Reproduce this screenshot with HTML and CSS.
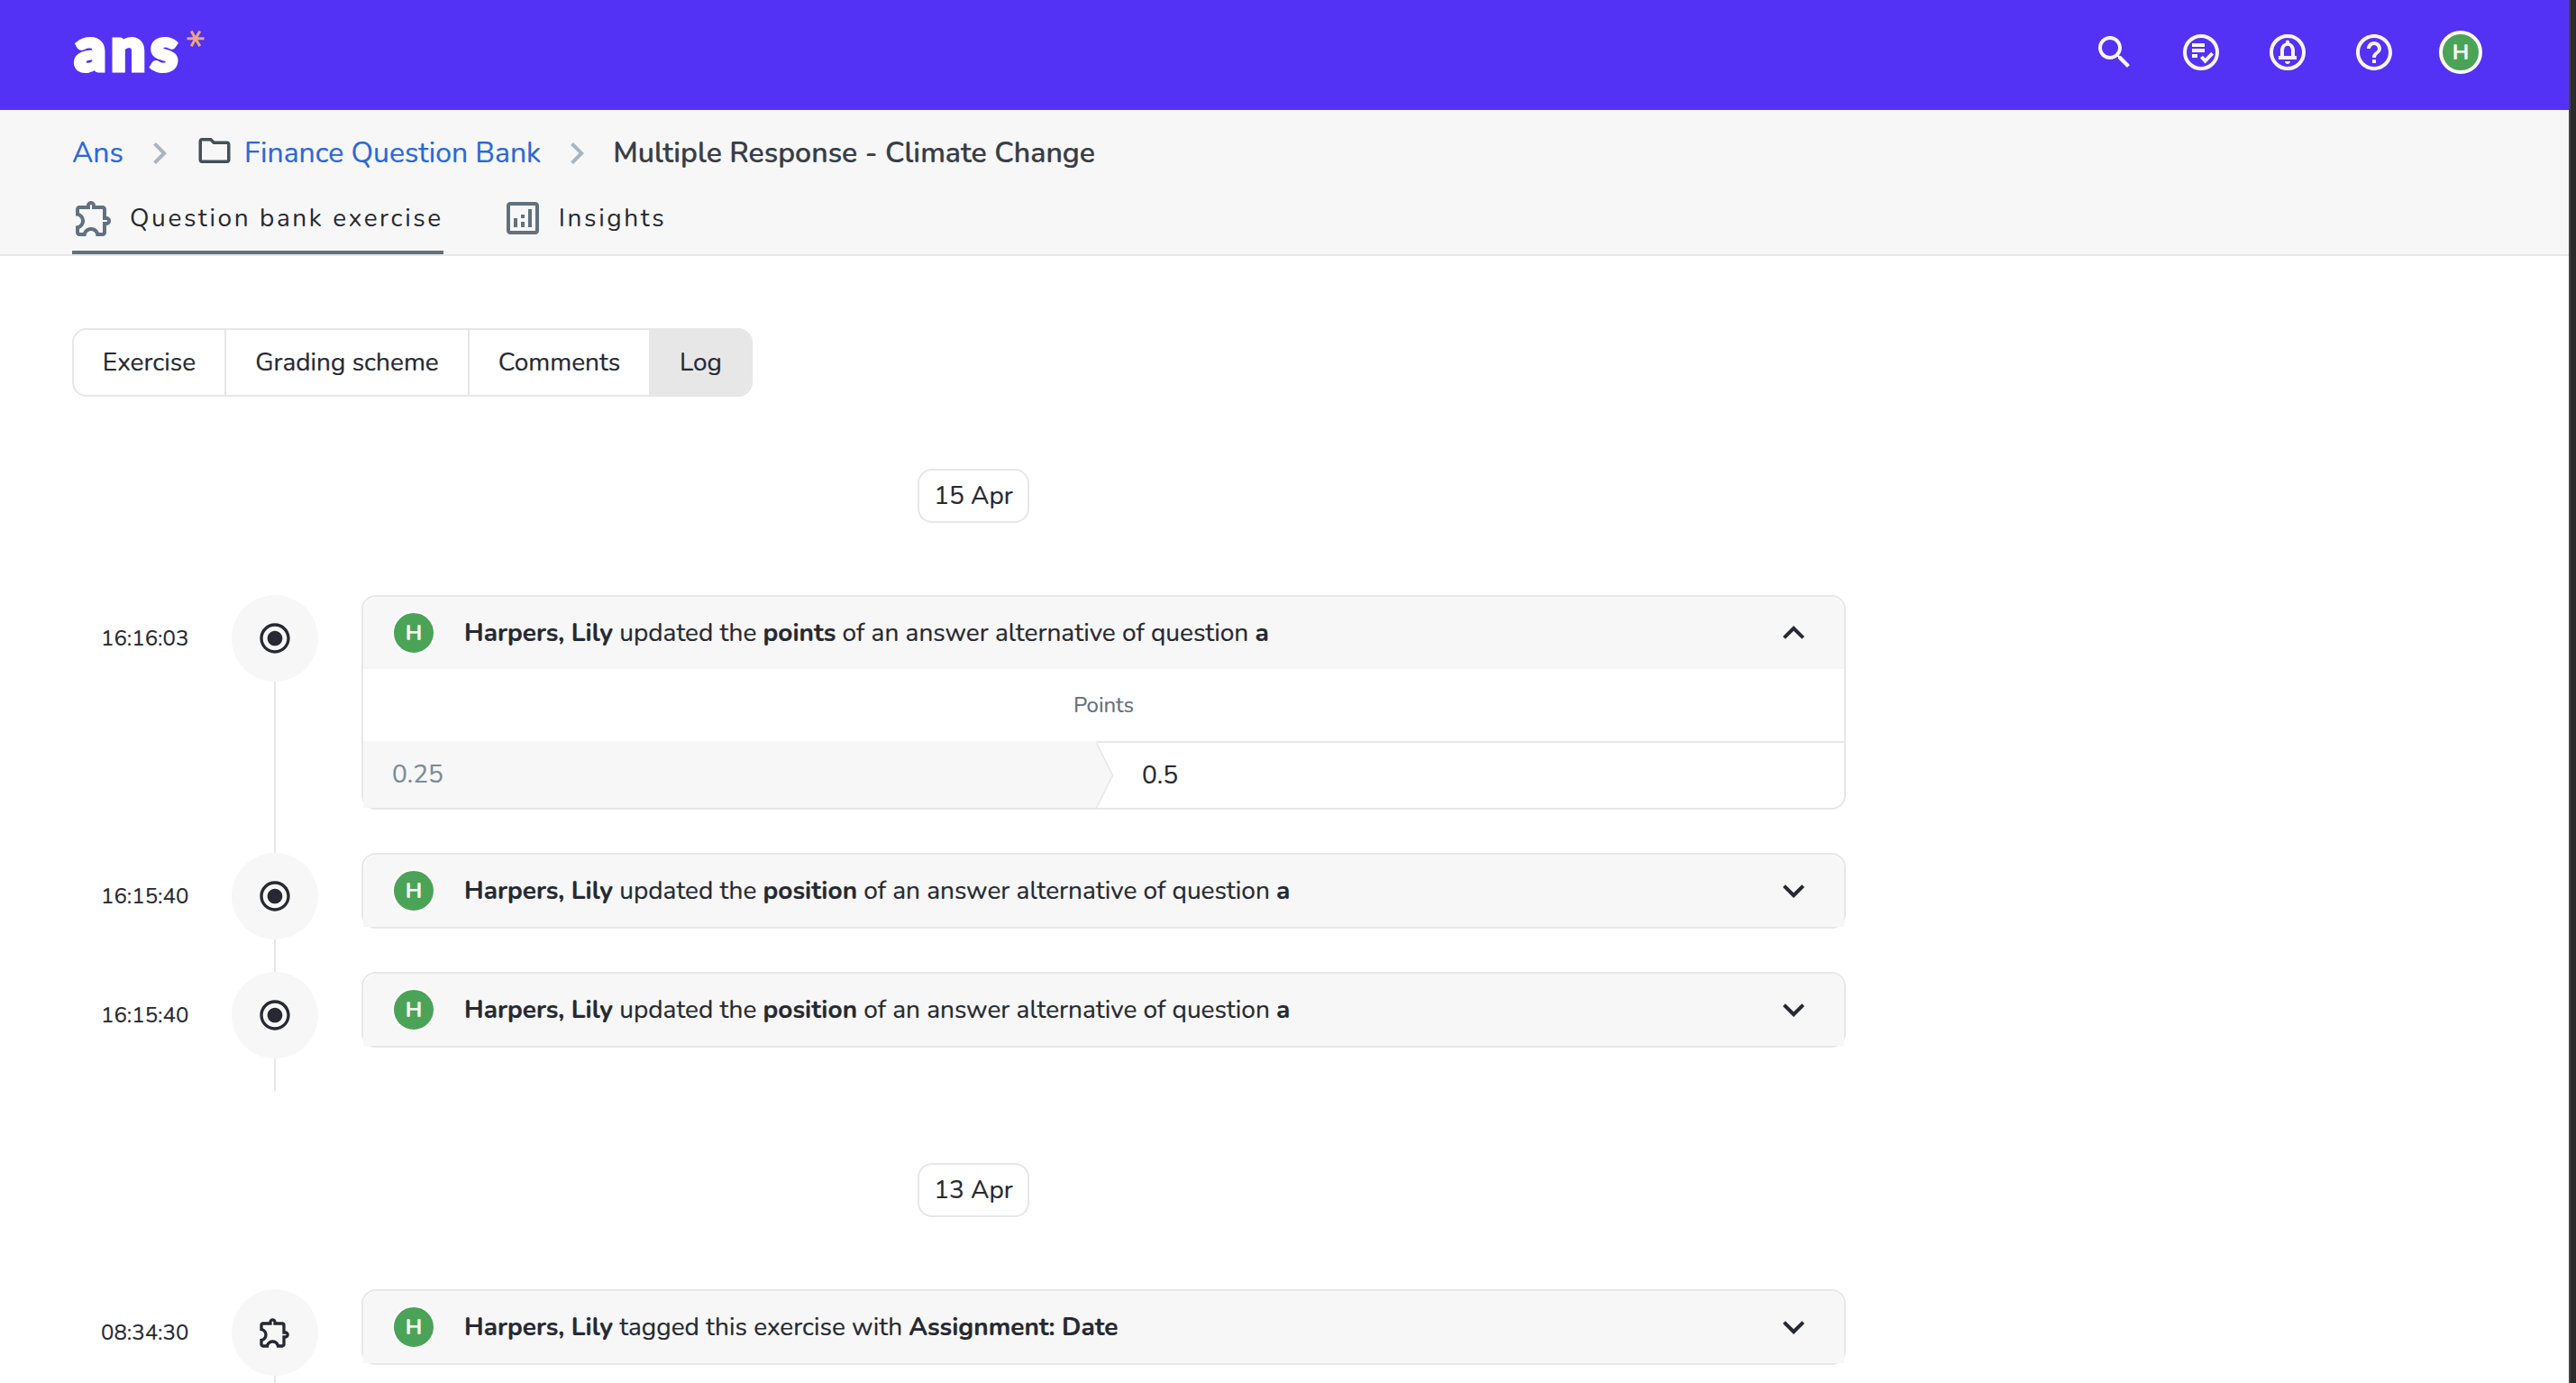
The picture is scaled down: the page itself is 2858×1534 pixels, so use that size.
FILE: index.html
```
<!DOCTYPE html>
<html lang="en">
<head>
    <meta charset="UTF-8">
    <meta name="viewport" content="width=device-width, initial-scale=1.0">
    <title>Multiple Response - Climate Change</title>
    <link rel="stylesheet" href="styles.css">
</head>
<body>
    <!-- Shared icons -->
    <svg class="icon-defs" width="0" height="0">
        <symbol id="chevron-right" viewBox="0 0 24 24"><path d="M10 6L8.59 7.41 13.17 12l-4.58 4.59L10 18l6-6z"/></symbol>
        <symbol id="expand-more" viewBox="0 0 24 24"><path d="M16.59 8.59L12 13.17 7.41 8.59 6 10l6 6 6-6z"/></symbol>
        <symbol id="expand-less" viewBox="0 0 24 24"><path d="M12 8l-6 6 1.41 1.41L12 10.83l4.59 4.58L18 14z"/></symbol>
        <symbol id="radio" viewBox="0 0 24 24"><path d="M12 7c-2.76 0-5 2.24-5 5s2.24 5 5 5 5-2.24 5-5-2.24-5-5-5zm0-5C6.48 2 2 6.48 2 12s4.48 10 10 10 10-4.48 10-10S17.52 2 12 2zm0 18c-4.42 0-8-3.58-8-8s3.58-8 8-8 8 3.58 8 8-3.58 8-8 8z"/></symbol>
        <symbol id="puzzle" viewBox="0 0 24 24"><path d="M10.5 4.5c.28 0 .5.22.5.5v2h6v6h2c.28 0 .5.22.5.5s-.22.5-.5.5h-2v6h-2.12c-.68-1.75-2.39-3-4.38-3s-3.7 1.25-4.38 3H4v-2.12c1.75-.68 3-2.39 3-4.38 0-1.99-1.24-3.7-2.99-4.38L4 7h6V5c0-.28.22-.5.5-.5m0-2C9.12 2.5 8 3.62 8 5H4c-1.1 0-1.99.9-1.99 2v3.8h.29c1.49 0 2.7 1.21 2.7 2.7s-1.21 2.7-2.7 2.7H2V20c0 1.1.9 2 2 2h3.8v-.3c0-1.49 1.21-2.7 2.7-2.7s2.7 1.21 2.7 2.7v.3H17c1.1 0 2-.9 2-2v-4c1.38 0 2.5-1.12 2.5-2.5S20.38 11 19 11V7c0-1.1-.9-2-2-2h-4c0-1.38-1.12-2.5-2.5-2.5z"/></symbol>
    </svg>

    <div class="page">
        <header class="topbar">
            <a class="logo">
                <span class="logo-text">ans</span>
                <svg class="logo-star" viewBox="0 0 20 20"><path d="M0.5 9.7h19M5.2 1.4l9.6 16.8M14.8 1.4L5.2 18.2"/></svg>
            </a>
            <nav class="actions">
                <svg class="icon" viewBox="0 0 24 24"><path d="M15.5 14h-.79l-.28-.27C15.41 12.59 16 11.11 16 9.5 16 5.91 13.09 3 9.5 3S3 5.91 3 9.5 5.91 16 9.5 16c1.61 0 3.09-.59 4.23-1.57l.27.28v.79l5 4.99L20.49 19l-4.99-5zm-6 0C7.01 14 5 11.99 5 9.5S7.01 5 9.5 5 14 7.01 14 9.5 11.99 14 9.5 14z"/></svg>
                <svg class="icon" viewBox="0 0 24 24">
                    <circle class="ring" cx="12" cy="12" r="9"/>
                    <path d="M7 7h7v2H7zM7 10h7v2H7zM7 13h3v2H7z"/>
                    <path class="ring" d="M12.2 14.5l2.1 2.3 4-4.2"/>
                </svg>
                <svg class="icon" viewBox="0 0 24 24">
                    <circle class="ring" cx="12" cy="12" r="9"/>
                    <path d="M12 18.5c.83 0 1.5-.67 1.5-1.5h-3c0 .83.67 1.5 1.5 1.5zM16 14v-3c0-2.06-1.1-3.78-3-4.24v-.51c0-.55-.45-1-1-1s-1 .45-1 1v.51C9.1 7.22 8 8.94 8 11v3H7v2h10v-2h-1zm-2 0h-4v-3c0-1.66.9-2.6 2-2.6s2 .94 2 2.6v3z"/>
                </svg>
                <svg class="icon" viewBox="0 0 24 24"><path d="M11 18h2v-2h-2v2zm1-16C6.48 2 2 6.48 2 12s4.48 10 10 10 10-4.48 10-10S17.52 2 12 2zm0 18c-4.41 0-8-3.59-8-8s3.59-8 8-8 8 3.59 8 8-3.59 8-8 8zm0-14c-2.21 0-4 1.79-4 4h2c0-1.1.9-2 2-2s2 .9 2 2c0 2-3 1.75-3 5h2c0-2.25 3-2.5 3-5 0-2.21-1.79-4-4-4z"/></svg>
                <span class="avatar avatar-top">H</span>
            </nav>
        </header>

        <div class="subheader">
            <div class="breadcrumb">
                <a class="crumb-home">Ans</a>
                <svg class="sep"><use href="#chevron-right"/></svg>
                <svg class="folder" viewBox="0 0 24 24"><path d="M9.17 6l2 2H20v10H4V6h5.17M10 4H4c-1.1 0-1.99.9-1.99 2L2 18c0 1.1.9 2 2 2h16c1.1 0 2-.9 2-2V8c0-1.1-.9-2-2-2h-8l-2-2z"/></svg>
                <a class="crumb-bank">Finance Question Bank</a>
                <svg class="sep"><use href="#chevron-right"/></svg>
                <span class="crumb-current">Multiple Response - Climate Change</span>
            </div>
            <div class="tabs">
                <a class="tab active">
                    <svg class="icon"><use href="#puzzle"/></svg>
                    <span>Question bank exercise</span>
                </a>
                <a class="tab">
                    <svg class="icon" viewBox="0 0 24 24"><path d="M19 3H5c-1.1 0-2 .9-2 2v14c0 1.1.9 2 2 2h14c1.1 0 2-.9 2-2V5c0-1.1-.9-2-2-2zm0 16H5V5h14v14z"/><path d="M7 12h2v5H7zM15 7h2v10h-2zM11 14h2v3h-2zM11 10h2v2h-2z"/></svg>
                    <span>Insights</span>
                </a>
            </div>
        </div>

        <main class="content">
            <div class="segments">
                <a class="segment seg-exercise">Exercise</a>
                <a class="segment seg-grading">Grading scheme</a>
                <a class="segment seg-comments">Comments</a>
                <a class="segment seg-log selected">Log</a>
            </div>

            <div class="date">15 Apr</div>
            <div class="day">
                <div class="entry">
                    <time>16:16:03</time>
                    <div class="track"><span class="dot"><svg><use href="#radio"/></svg></span></div>
                    <div class="card">
                        <div class="card-header">
                            <span class="avatar">H</span>
                            <p><b>Harpers, Lily</b> updated the <b>points</b> of an answer alternative of question <b>a</b></p>
                            <svg class="icon"><use href="#expand-less"/></svg>
                        </div>
                        <div class="card-label">Points</div>
                        <div class="change">
                            <div class="old">0.25</div>
                            <svg class="arrow" viewBox="0 0 20 74"><path class="arrow-fill" d="M0 0L1 2l18 36L1 74H0z"/><path class="arrow-line" d="M0.5 2l18 36L0.5 74"/></svg>
                            <div class="new">0.5</div>
                        </div>
                    </div>
                </div>
                <div class="entry">
                    <time>16:15:40</time>
                    <div class="track"><span class="dot"><svg><use href="#radio"/></svg></span></div>
                    <div class="card">
                        <div class="card-header">
                            <span class="avatar">H</span>
                            <p><b>Harpers, Lily</b> updated the <b>position</b> of an answer alternative of question <b>a</b></p>
                            <svg class="icon"><use href="#expand-more"/></svg>
                        </div>
                    </div>
                </div>
                <div class="entry">
                    <time>16:15:40</time>
                    <div class="track"><span class="dot"><svg><use href="#radio"/></svg></span></div>
                    <div class="card">
                        <div class="card-header">
                            <span class="avatar">H</span>
                            <p><b>Harpers, Lily</b> updated the <b>position</b> of an answer alternative of question <b>a</b></p>
                            <svg class="icon"><use href="#expand-more"/></svg>
                        </div>
                    </div>
                </div>
            </div>

            <div class="date">13 Apr</div>
            <div class="day">
                <div class="entry">
                    <time>08:34:30</time>
                    <div class="track"><span class="dot"><svg><use href="#puzzle"/></svg></span></div>
                    <div class="card">
                        <div class="card-header">
                            <span class="avatar">H</span>
                            <p><b>Harpers, Lily</b> tagged this exercise with <b>Assignment: Date</b></p>
                            <svg class="icon"><use href="#expand-more"/></svg>
                        </div>
                    </div>
                </div>
            </div>
        </main>
    </div>
</body>
</html>
```
FILE: styles.css
```
* {
    box-sizing: border-box;
}
body {
    margin: 0;
    height: 1534px;
    overflow: hidden;
    background-color: #2b2b2b;
    color: #262931;
    font-family: Nunito, Lato, "Noto Sans", sans-serif;
    font-size: 28px;
    line-height: 40px;
    -webkit-text-stroke: 0.2px currentColor;
}
.icon-defs {
    display: block;
}
.page {
    height: 1534px;
    margin-right: 6px;
    border-right: 2px solid #444;
    background-color: #fff;
    overflow: hidden;
}
svg {
    fill: currentColor;
    flex-shrink: 0;
}
.icon {
    width: 48px;
    height: 48px;
}

/* Top bar */
.topbar {
    display: flex;
    justify-content: space-between;
    align-items: flex-start;
    height: 122px;
    padding: 34px 96px 0 80px;
    background-color: #5432f5;
}
.logo {
    display: flex;
    align-items: flex-start;
    color: #fff;
}
.logo-text {
    width: 127px;
    padding-left: 3px;
    font-family: Lato, sans-serif;
    font-size: 67px;
    line-height: 36px;
    font-weight: 900;
    letter-spacing: 6px;
    -webkit-text-stroke: 5px #fff;
}
.logo-star {
    width: 20px;
    height: 20px;
    margin-top: -1px;
    fill: none;
    stroke: #eba67d;
    stroke-width: 3;
}
.actions {
    display: flex;
    gap: 48px;
    color: #f6f6f9;
}
.ring {
    fill: none;
    stroke: currentColor;
    stroke-width: 2;
}
.avatar {
    display: flex;
    justify-content: center;
    align-items: center;
    flex-shrink: 0;
    width: 48px;
    height: 48px;
    border: 2px solid #fff;
    border-radius: 50%;
    background-color: #4ba357;
    color: #f2f7f2;
    font-size: 24px;
    line-height: 24px;
    font-weight: 700;
}
.avatar-top {
    border-width: 4px;
}

/* Breadcrumb and tabs */
.subheader {
    height: 162px;
    padding: 24px 80px 0;
    border-bottom: 2px solid #e7e7e7;
    background-color: #f7f7f7;
}
.breadcrumb {
    display: flex;
    align-items: center;
    height: 48px;
    font-size: 32px;
    color: #2a68d6;
}
.sep {
    width: 48px;
    height: 48px;
    margin: 0 16px;
    color: #a9b5be;
}
.folder {
    width: 42px;
    height: 42px;
    margin: -6px 12px 0 0;
    color: #454e5a;
}
.crumb-current {
    color: #383d46;
    font-weight: 600;
}
.tabs {
    display: flex;
    gap: 64px;
    margin-top: 24px;
}
.tab {
    display: flex;
    align-items: flex-start;
    gap: 16px;
    height: 64px;
    letter-spacing: 2.6px;
    -webkit-text-stroke: 0;
}
.tab span {
    line-height: 48px;
}
.tab .icon {
    color: #61717f;
}
.tab.active {
    border-bottom: 4px solid #61717f;
}

/* Segmented buttons */
.content {
    width: 2080px;
    padding: 80px 0 0 80px;
}
.segments {
    display: flex;
    width: 755px;
    height: 76px;
    border: 2px solid #e7e7e7;
    border-radius: 16px;
    overflow: hidden;
}
.segment {
    display: flex;
    align-items: center;
    justify-content: center;
    border-right: 2px solid #e7e7e7;
}
.seg-exercise {
    width: 169px;
}
.seg-grading {
    width: 270px;
}
.seg-comments {
    width: 201px;
}
.seg-log {
    flex: 1;
    border-right: none;
}
.segment.selected {
    background-color: #e7e7e7;
}

/* Timeline */
.date {
    display: flex;
    align-items: center;
    justify-content: center;
    width: 124px;
    height: 60px;
    margin: 80px auto;
    border: 2px solid #e7e7e7;
    border-radius: 16px;
}
.entry {
    display: flex;
    gap: 48px;
    padding: 0 32px;
}
.entry time {
    width: 97px;
    font-size: 24px;
    line-height: 96px;
    text-align: right;
    white-space: nowrap;
}
.track {
    width: 96px;
    background: linear-gradient(#e7e7e7, #e7e7e7) center / 2px 100% no-repeat;
}
.dot {
    display: flex;
    align-items: center;
    justify-content: center;
    width: 96px;
    height: 96px;
    border-radius: 50%;
    background-color: #f7f7f7;
}
.dot svg {
    width: 40px;
    height: 40px;
}
.card {
    flex: 1;
    margin-bottom: 48px;
    border: 2px solid #e7e7e7;
    border-radius: 16px;
}
.card-header {
    display: flex;
    align-items: center;
    height: 80px;
    padding: 0 32px;
    border-radius: 16px 16px 0 0;
    background-color: #f7f7f7;
}
.card-header p {
    flex: 1;
    margin: 0 0 0 32px;
}
.card-label {
    height: 80px;
    font-size: 24px;
    line-height: 80px;
    text-align: center;
    color: #61717f;
}
.change {
    display: flex;
    height: 74px;
    line-height: 74px;
}
.old {
    width: 813px;
    padding-left: 32px;
    background-color: #f7f7f7;
    color: #7b8b99;
}
.arrow {
    width: 20px;
    height: 74px;
    margin-right: -20px;
    z-index: 1;
}
.arrow-fill {
    fill: #f7f7f7;
}
.arrow-line {
    fill: none;
    stroke: #e7e7e7;
    stroke-width: 1.5;
}
.new {
    flex: 1;
    padding-left: 51px;
    border-top: 2px solid #e7e7e7;
    line-height: 72px;
}
```
